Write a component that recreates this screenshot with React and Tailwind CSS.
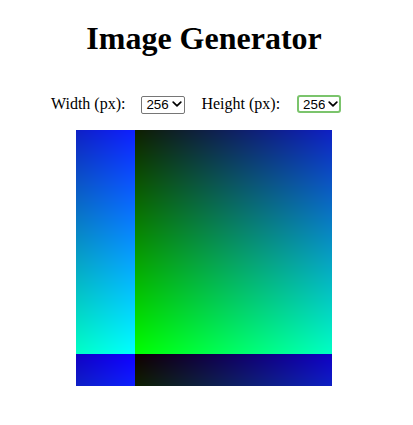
import React, { useEffect, useRef } from "react";

function Chevron() {
  return (
    <svg width="10" height="6" viewBox="0 0 10 6" className="pointer-events-none absolute right-[3px] top-[6px]">
      <path d="M1.2 1.2 L5 4.8 L8.8 1.2" fill="none" stroke="#000" strokeWidth="1.7" strokeLinecap="round" strokeLinejoin="round" />
    </svg>
  );
}

function Select({ focused }) {
  return (
    <div className="relative">
      <select
        defaultValue="256"
        className={
          "appearance-none h-[18px] w-[44px] bg-white pl-[4px] pr-[14px] text-[13.33px] leading-[16px] text-black outline-none " +
          (focused
            ? "border-2 border-[#7bc46c] rounded-[3px] pl-[4px]"
            : "border border-[#767676] rounded-[2px]")
        }
        style={{ fontFamily: '"Liberation Sans", Arial, sans-serif' }}
      >
        <option value="64">64</option>
        <option value="128">128</option>
        <option value="256">256</option>
        <option value="512">512</option>
      </select>
      <Chevron />
    </div>
  );
}

function GradientCanvas() {
  const ref = useRef(null);
  useEffect(() => {
    const c = ref.current;
    if (!c) return;
    const ctx = c.getContext("2d");
    const img = ctx.createImageData(256, 256);
    for (let j = 0; j < 256; j++) {
      for (let i = 0; i < 256; i++) {
        const g = (j + 32) % 256;
        const b = (i + 197) % 256;
        const r = Math.round((255 - g) / 16);
        const k = (j * 256 + i) * 4;
        img.data[k] = r;
        img.data[k + 1] = g;
        img.data[k + 2] = b;
        img.data[k + 3] = 255;
      }
    }
    ctx.putImageData(img, 0, 0);
  }, []);
  return <canvas ref={ref} width={256} height={256} className="block h-[256px] w-[256px]" />;
}

export default function App() {
  return (
    <div
      className="min-h-[425px] w-[413px] bg-white text-black"
      style={{ fontFamily: '"Liberation Serif", "Times New Roman", serif' }}
    >
      <div className="flex w-[408px] flex-col items-center">
        <h1 className="mt-[20px] text-[32px] font-bold leading-[37px]">Image Generator</h1>
      </div>
      <div className="mt-[38px] flex h-[18px] items-center pl-[51px] text-[16px] leading-[18px]">
        <label>Width (px):</label>
        <div className="ml-[16px]">
          <Select />
        </div>
        <label className="ml-[16px]">Height (px):</label>
        <div className="ml-[17px]">
          <Select focused />
        </div>
      </div>
      <div className="mt-[17px] flex w-[408px] justify-center">
        <GradientCanvas />
      </div>
    </div>
  );
}
